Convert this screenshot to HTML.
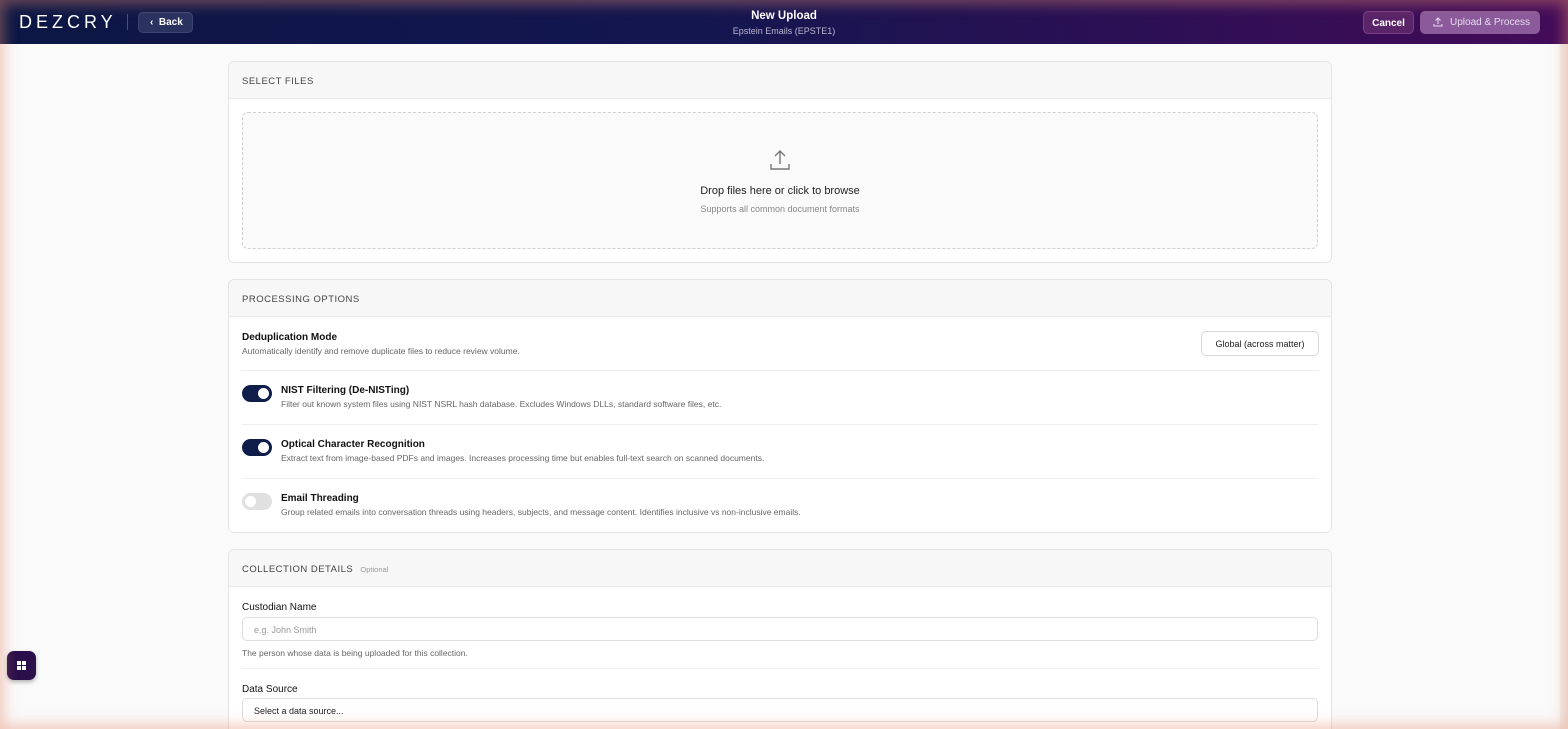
<!DOCTYPE html><html><head><style>
*{box-sizing:border-box;margin:0;padding:0}
html{width:1568px;height:729px;overflow:hidden}
body{width:1568px;height:729px;overflow:hidden;font-family:"Liberation Sans",sans-serif;background:#fafafa;position:relative;color:#1a1a2e}
.vig{position:absolute;inset:0;box-shadow:inset 0 0 14px 4px rgba(230,140,110,.45);pointer-events:none;z-index:5}
.hdr{position:absolute;left:0;top:0;width:1568px;height:44px;background:linear-gradient(90deg,#0c1745 0%,#141650 45%,#2e0f55 75%,#440b58 100%)}
.logo{position:absolute;left:19px;top:12px;color:#fff;font-size:18px;letter-spacing:4px;font-weight:300}
.sep{position:absolute;left:127px;top:14px;width:1px;height:16px;background:#4a4f7a}
.back{position:absolute;left:138px;top:12px;width:55px;height:21px;border-radius:5px;background:#2a3260;border:1px solid #3c4575;color:#fff;font-size:10px;font-weight:bold;padding:4px 0 0 11px}
.title{position:absolute;left:0;width:1568px;top:10px;text-align:center;color:#fff;font-size:11.5px;font-weight:bold}
.sub{position:absolute;left:0;width:1568px;top:26px;text-align:center;color:#b9b6d0;font-size:9px}
.cancel{position:absolute;left:1363px;top:11px;width:51px;height:23px;border-radius:5px;background:#5a2468;border:1px solid #7a3f88;color:#fff;font-size:10px;font-weight:bold;text-align:center;padding-top:6px}
.up{position:absolute;left:1420px;top:11px;width:120px;height:23px;border-radius:5px;background:#8a5a9b;color:#e8dcef;font-size:10px;padding:6px 0 0 30px}
.scroll{position:absolute;right:0;top:44px;width:8px;height:685px;background:#f0f0f0}
.card{position:absolute;left:228px;width:1104px;background:#fff;border:1px solid #e4e4e4;border-radius:6px;overflow:hidden}
.ch{height:37px;background:#f7f7f7;border-bottom:1px solid #e8e8e8;padding:14px 0 0 13px;font-size:9.5px;color:#444;letter-spacing:.5px}
.drop{position:absolute;left:13px;top:50px;width:1076px;height:137px;border:1.5px dashed #d0d0d0;border-radius:6px;background:#fafafa;text-align:center}
.row{position:absolute;left:13px;width:1076px}
.lbl{font-size:10px;font-weight:bold;color:#111}
.ds{font-size:8.5px;color:#666;margin-top:3px}
.tg{position:absolute;left:13px;width:30px;height:17px;border-radius:9px;background:#0e1d4a}
.tg::after{content:"";position:absolute;right:3px;top:3px;width:11px;height:11px;border-radius:50%;background:#fff}
.tg.off{background:#e0e0e0}.tg.off::after{left:3px;right:auto}
.hr{position:absolute;left:13px;width:1076px;height:1px;background:#eee}
.inp{position:absolute;left:13px;width:1076px;height:24px;border:1px solid #ddd;border-radius:5px;font-size:9px;padding:7px 0 0 11px}
</style></head><body>
<div class="hdr">
<div class="logo">DEZCRY</div><div class="sep"></div>
<div class="back">‹&nbsp;&nbsp;Back</div>
<div class="title">New Upload</div><div class="sub">Epstein Emails (EPSTE1)</div>
<div class="cancel">Cancel</div>
<div class="up"><svg style="position:absolute;left:13px;top:6px" width="10" height="10" viewBox="0 0 10 10" fill="none" stroke="#e8dcef" stroke-width="1"><path d="M5 7V1M2.5 3.5L5 1l2.5 2.5M1 7v2h8V7"/></svg>Upload &amp; Process</div>
</div>
<div class="scroll"></div>
<div class="card" style="top:61px;height:202px">
<div class="ch">SELECT FILES</div>
<div class="drop">
<svg style="margin-top:35px" width="24" height="24" viewBox="0 0 24 24" fill="none" stroke="#777" stroke-width="1.4"><path d="M12 16V3M7 8l5-5 5 5M3 16v5h18v-5"/></svg>
<div style="font-size:11px;color:#222;margin-top:8px">Drop files here or click to browse</div>
<div style="font-size:9px;color:#888;margin-top:7px">Supports all common document formats</div>
</div></div>
<div class="card" style="top:279px;height:254px">
<div class="ch">PROCESSING OPTIONS</div>
<div class="row" style="top:52px"><div class="lbl">Deduplication Mode</div><div class="ds">Automatically identify and remove duplicate files to reduce review volume.</div></div>
<div style="position:absolute;left:972px;top:51px;width:118px;height:25px;border:1px solid #d8d8d8;border-radius:5px;font-size:9px;text-align:center;padding-top:7px;color:#222">Global (across matter)</div>
<div class="hr" style="top:90px"></div>
<div class="tg" style="top:105px"></div>
<div class="row" style="left:52px;top:105px"><div class="lbl">NIST Filtering (De-NISTing)</div><div class="ds">Filter out known system files using NIST NSRL hash database. Excludes Windows DLLs, standard software files, etc.</div></div>
<div class="hr" style="top:144px"></div>
<div class="tg" style="top:159px"></div>
<div class="row" style="left:52px;top:159px"><div class="lbl">Optical Character Recognition</div><div class="ds">Extract text from image-based PDFs and images. Increases processing time but enables full-text search on scanned documents.</div></div>
<div class="hr" style="top:198px"></div>
<div class="tg off" style="top:213px"></div>
<div class="row" style="left:52px;top:213px"><div class="lbl">Email Threading</div><div class="ds">Group related emails into conversation threads using headers, subjects, and message content. Identifies inclusive vs non-inclusive emails.</div></div>
</div>
<div class="card" style="top:549px;height:180px;border-bottom:none;border-radius:6px 6px 0 0">
<div class="ch">COLLECTION DETAILS <span style="font-size:7.5px;color:#999;letter-spacing:0;margin-left:4px">Optional</span></div>
<div class="row" style="top:52px"><div class="lbl" style="font-weight:normal;color:#111;font-size:10px">Custodian Name</div></div>
<div class="inp" style="top:67px;color:#999">e.g. John Smith</div>
<div class="row" style="top:95px"><div class="ds">The person whose data is being uploaded for this collection.</div></div>
<div class="hr" style="top:118px"></div>
<div class="row" style="top:134px"><div class="lbl" style="font-weight:normal;color:#111">Data Source</div></div>
<div class="inp" style="top:148px;color:#222">Select a data source...</div>
</div>
<div style="position:absolute;left:7px;top:651px;width:29px;height:29px;border-radius:7px;background:#2a0f4a;box-shadow:0 2px 4px rgba(0,0,0,.3)">
<svg style="position:absolute;left:10px;top:10px" width="9" height="9" viewBox="0 0 9 9" fill="#fff"><rect width="4" height="4"/><rect x="5" width="4" height="4"/><rect y="5" width="4" height="4"/><rect x="5" y="5" width="4" height="4"/></svg></div>
<div class="vig"></div>
</body></html>
